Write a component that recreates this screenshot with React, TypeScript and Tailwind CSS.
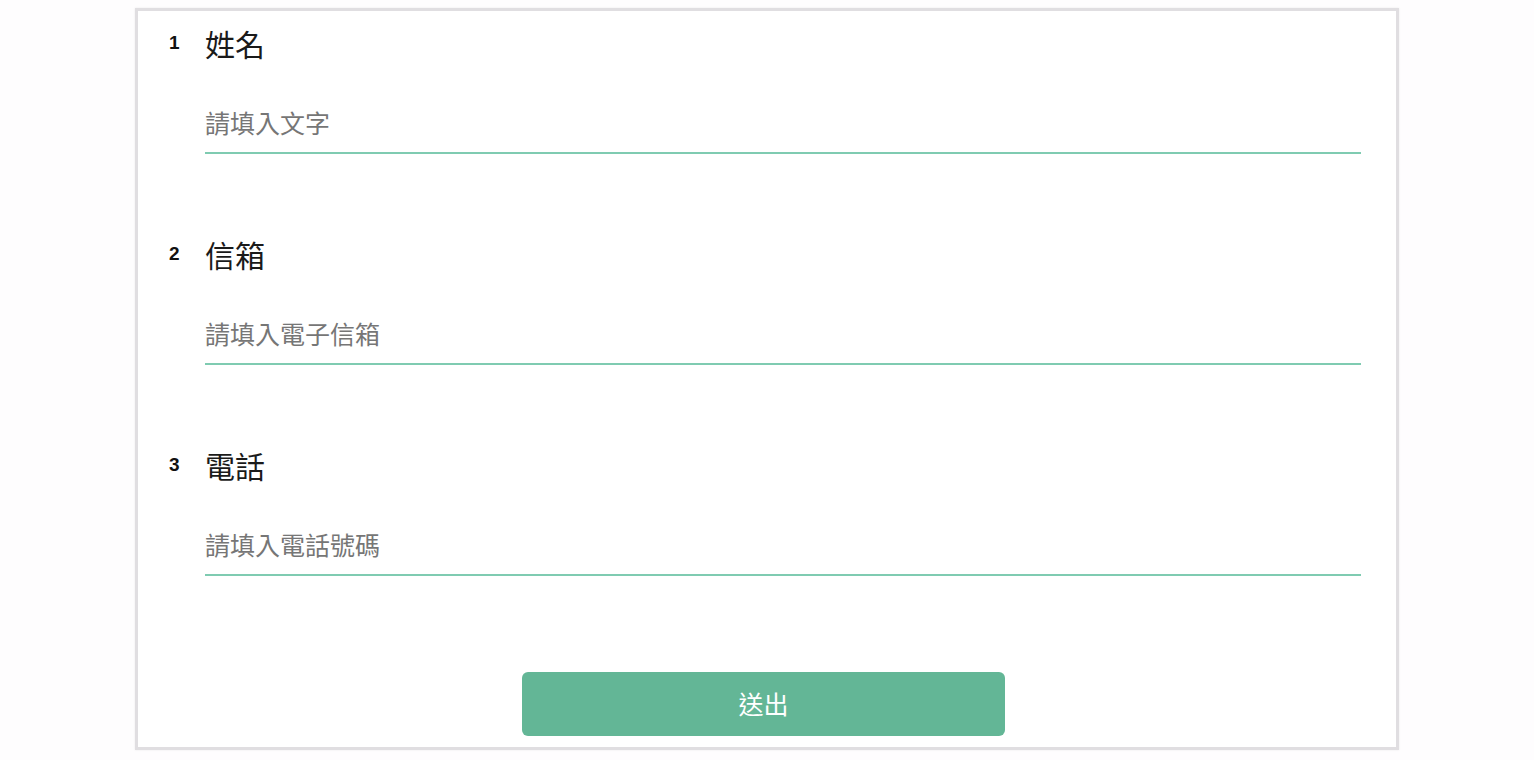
const FIELDS = [
  { no: "1", label: "姓名", placeholder: "請填入文字", type: "text" },
  { no: "2", label: "信箱", placeholder: "請填入電子信箱", type: "email" },
  { no: "3", label: "電話", placeholder: "請填入電話號碼", type: "tel" },
];

export default function App() {
  return (
    <div
      className="flex min-h-[760px] justify-center bg-[#fefdfe] pt-[8px]"
      style={{ fontFamily: '"Liberation Sans", "Noto Sans CJK TC", sans-serif' }}
    >
      <form className="flex h-[742px] w-[1264px] flex-col border-[3px] border-[#e0dee1] bg-white pl-[31px] pr-[35px] pt-[15px] shadow-[0_0_2px_rgba(0,0,0,0.08)]">
        {FIELDS.map((f) => (
          <div key={f.no} className="flex h-[211px] shrink-0 flex-col">
            <div className="flex items-start">
              <span className="w-[36px] pt-[6px] text-[19px] font-bold leading-[22px] text-[#111]">
                {f.no}
              </span>
              <span className="text-[30px] leading-[40px] text-[#1a1a1a]">
                {f.label}
              </span>
            </div>
            <div className="ml-[36px] mt-[38px] border-b-2 border-[#7fcbb1]">
              <input
                type={f.type}
                placeholder={f.placeholder}
                className="h-[48px] w-full bg-transparent pb-[8px] text-[25px] text-[#333] outline-none placeholder:text-[#767676]"
              />
            </div>
          </div>
        ))}
        <div className="mt-[13px] flex shrink-0 justify-center pr-[3px]">
          <button
            type="button"
            className="h-[64px] w-[483px] rounded-md bg-[#63b696] pt-[3px] text-[25px] text-white"
          >
            送出
          </button>
        </div>
      </form>
    </div>
  );
}
